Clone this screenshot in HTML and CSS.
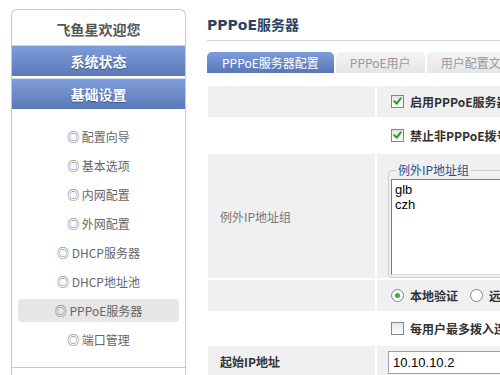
FILE: index.html
```html
<!DOCTYPE html>
<html lang="zh-CN">
<head>
  <meta charset="UTF-8">
  <title>PPPoE服务器</title>
  <link rel="stylesheet" href="styles.css">
</head>
<body>
<div class="page">
  <div class="sidebar">
    <div class="welcome">飞鱼星欢迎您</div>
    <div class="bar">系统状态</div>
    <div class="bar">基础设置</div>
    <ul class="menu">
      <li>◎ 配置向导</li>
      <li>◎ 基本选项</li>
      <li>◎ 内网配置</li>
      <li>◎ 外网配置</li>
      <li>◎ DHCP服务器</li>
      <li>◎ DHCP地址池</li>
      <li class="active">◎ PPPoE服务器</li>
      <li>◎ 端口管理</li>
    </ul>
  </div>

  <div class="main">
    <h1 class="title">PPPoE服务器</h1>
    <div class="tabs">
      <div class="tab current">PPPoE服务器配置</div>
      <div class="tab">PPPoE用户</div>
      <div class="tab">用户配置文件</div>
    </div>

    <div class="form">
      <div class="label gray"></div>
      <div class="value gray"><span class="check on"></span><b>启用PPPoE服务器</b></div>

      <div class="label"></div>
      <div class="value"><span class="check on"></span><b>禁止非PPPoE拨号用户上网</b></div>

      <div class="label gray tall">例外IP地址组</div>
      <div class="value gray tall">
        <fieldset class="group">
          <legend>例外IP地址组</legend>
          <textarea class="ips">glb
czh</textarea>
        </fieldset>
      </div>

      <div class="label gray"></div>
      <div class="value gray">
        <span class="radio on"></span><b>本地验证</b>
        <span class="radio"></span><b>远程验证</b>
      </div>

      <div class="label"></div>
      <div class="value"><span class="check"></span><b>每用户最多拨入连接数</b></div>

      <div class="label gray strong">起始IP地址</div>
      <div class="value gray"><input class="field" type="text" value="10.10.10.2"></div>
    </div>
  </div>
</div>
</body>
</html>
```

FILE: styles.css
```css
body {
  margin: 0;
  background: #fff;
  font-family: "Noto Sans CJK SC", "DejaVu Sans", sans-serif;
  font-size: 12px;
  color: #333;
  overflow: hidden;
}

.page {
  display: flex;
  align-items: flex-start;
  width: 700px;
}

/* left menu */
.sidebar {
  margin: 9px 0 0 11px;
  width: 173px;
  height: 420px;
  border: 1px solid #c9c9c9;
  border-bottom: none;
  border-radius: 6px 6px 0 0;
}

.welcome {
  height: 35px;
  line-height: 39px;
  text-align: center;
  font-size: 14px;
  font-weight: bold;
  color: #555;
}

.bar {
  height: 30px;
  line-height: 30px;
  margin-bottom: 2px;
  text-align: center;
  font-size: 14px;
  font-weight: bold;
  color: #fff;
  text-shadow: 0 1px 1px #3b5585;
  background: linear-gradient(#7f9ddb, #5b79b8);
  border-top: 1px solid #c4d4ee;
}

.bar + .bar { border-top-color: #d8e2f2; }

.menu {
  list-style: none;
  display: flex;
  flex-direction: column;
  gap: 6px;
  margin: 0;
  padding: 14px 6px 16px;
  border-bottom: 1px solid #c9c9c9;
}

.menu li {
  height: 23px;
  line-height: 23px;
  text-align: center;
  color: #666;
  border-radius: 4px;
}

.menu li.active { background: #e7e5e5; }

/* content */
.main {
  flex: none;
  width: 400px;
  margin-left: 21px;
}

.title {
  margin: 15px 0 0;
  padding-bottom: 5px;
  height: 20px;
  line-height: 20px;
  font-size: 14px;
  font-family: "DejaVu Sans", "Noto Sans CJK SC", sans-serif;
  color: #2a4265;
  border-bottom: 1px solid #d3d3d3;
}

.tabs {
  display: flex;
  gap: 2px;
  margin-top: 11px;
}

.tab {
  height: 21px;
  line-height: 22px;
  padding: 0 14px;
  border-radius: 5px 5px 0 0;
  background: linear-gradient(#f3f3f3, #e6e6e6);
  color: #999;
  white-space: nowrap;
}

.tab.current {
  padding: 0 15px;
  background: linear-gradient(#7e9cda, #5977b7);
  color: #fff;
}

.form {
  display: grid;
  grid-template-columns: 167px 1fr;
  grid-template-rows: 31px 33px 124px 31px 31px 30px;
  gap: 2px;
  margin: 13px 0 0 1px;
}

.label {
  display: flex;
  align-items: center;
  padding-left: 12px;
  color: #777;
}

.label.strong {
  font-weight: bold;
  color: #333;
}

.value {
  display: flex;
  align-items: center;
  gap: 6px;
  padding-left: 14px;
  white-space: nowrap;
}

.value.tall { align-items: flex-start; padding-left: 11px; }

.gray { background: #f0f0f0; }

.value b { color: #333; }

.check {
  width: 11px;
  height: 11px;
  border: 1px solid #7a8796;
  background: linear-gradient(#e4e4e4, #fff);
  position: relative;
}

.check.on::after {
  content: "";
  position: absolute;
  left: 3px;
  top: 0;
  width: 3px;
  height: 6px;
  border: solid #23a023;
  border-width: 0 2px 2px 0;
  transform: rotate(40deg);
}

.radio {
  width: 11px;
  height: 11px;
  border: 1px solid #7a8796;
  border-radius: 50%;
  background: #fff;
  position: relative;
}

.radio.on::after {
  content: "";
  position: absolute;
  left: 3px;
  top: 3px;
  width: 5px;
  height: 5px;
  border-radius: 50%;
  background: #3eae3e;
}

.radio + b + .radio { margin-left: 6px; }

.group {
  margin: 9px 0 0;
  padding: 0 2px 2px;
  border: 1px solid #cfcfcf;
  border-radius: 4px;
  width: 300px;
}

.group legend {
  margin-left: 5px;
  padding: 0 2px;
  line-height: 14px;
  color: #24508f;
}

.ips {
  display: block;
  width: 200px;
  height: 96px;
  margin-top: 2px;
  padding: 2px 3px;
  box-sizing: border-box;
  border: 1px solid #7d7d7d;
  border-right-color: #ddd;
  border-bottom-color: #ddd;
  font-family: "Liberation Sans", sans-serif;
  font-size: 13px;
  line-height: 15px;
  color: #000;
  resize: none;
}

.field {
  width: 200px;
  height: 23px;
  margin: 5px 0 0 -3px;
  padding: 0 4px;
  box-sizing: border-box;
  border: 1px solid #a0a0a0;
  font-family: "Liberation Sans", sans-serif;
  font-size: 13px;
  color: #000;
  align-self: flex-start;
}
```
